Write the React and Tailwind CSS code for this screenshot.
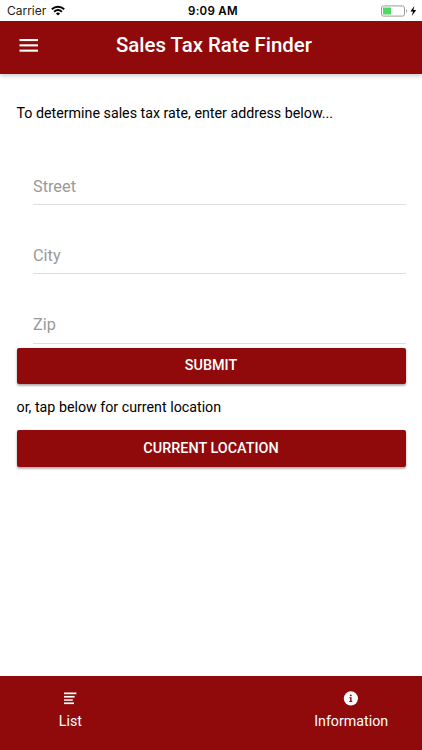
import React, { useState } from 'react';

const fields = [
  { name: 'street', label: 'Street' },
  { name: 'city', label: 'City' },
  { name: 'zip', label: 'Zip' },
];

const StatusBar = () => (
  <div className="relative h-[21px] flex items-center justify-between pl-[7px] pr-[5px] bg-white text-black shrink-0">
    <div className="flex items-center gap-[5px] font-['Inter','Liberation_Sans',sans-serif] text-[12px] leading-[21px] text-[#222222]">
      <span className="w-[39px] tracking-[-0.02px] whitespace-nowrap">Carrier</span>
      <svg width="14" height="11" viewBox="0 0 14 11" fill="none" stroke="#000" strokeWidth="1.9">
        <path d="M0.8 4.2C4.4 0.9 9.6 0.9 13.2 4.2" />
        <path d="M3.1 6.7C5.4 4.7 8.6 4.7 10.9 6.7" />
        <path d="M7 10.5L4.9 8.4C6.1 7.3 7.9 7.3 9.1 8.4Z" fill="#000" stroke="none" />
      </svg>
    </div>
    <span className="absolute left-[188px] top-[1px] font-['Inter','Liberation_Sans',sans-serif] text-[11.5px] leading-[21px] font-semibold tracking-[0.3px] whitespace-nowrap">
      9:09 AM
    </span>
    <svg width="36" height="12" viewBox="0 0 36 12">
      <rect x="0.5" y="0.9" width="23" height="10.2" rx="2" fill="#fff" stroke="#9b9b9b" />
      <rect x="2" y="2.5" width="8" height="7" fill="#4cd964" />
      <path d="M25 4.2C26.3 4.6 26.3 7.4 25 7.8Z" fill="#9b9b9b" />
      <path d="M33.3 1L29.4 6.6H32L30.8 11L35.2 5.1H32.4Z" fill="#000" />
    </svg>
  </div>
);

const SubmitButton = ({ children, onClick }) => (
  <button
    type="button"
    onClick={onClick}
    className="block w-full h-[36.5px] rounded-[2px] bg-[#900a0b] text-white text-[14.4px] font-medium shadow-[0_2px_2px_rgba(0,0,0,0.2),0_1px_3px_rgba(0,0,0,0.2)]"
  >
    {children}
  </button>
);

const App = () => {
  const [form, setForm] = useState({ street: '', city: '', zip: '' });

  return (
    <div className="h-screen flex flex-col bg-white overflow-hidden font-['Roboto',sans-serif]">
      <StatusBar />

      <header className="h-[52.5px] shrink-0 flex items-center bg-[#900a0b] text-white shadow-[0_2px_4px_rgba(0,0,0,0.2)]">
        <button type="button" aria-label="Menu" className="ml-[19px] pb-[3px]">
          <svg width="20" height="13" viewBox="0 0 20 13" fill="#fff">
            <rect x="0.5" y="0" width="18.5" height="2.1" />
            <rect x="0.5" y="5.3" width="18.5" height="2.1" />
            <rect x="0.5" y="10.6" width="18.5" height="2.1" />
          </svg>
        </button>
        <h1 className="ml-[77px] pb-[4px] text-[20.4px] leading-6 font-medium whitespace-nowrap">Sales Tax Rate Finder</h1>
      </header>

      <main className="flex-1 pl-4 pr-[16.5px] pt-[29.5px]">
        <p className="pl-[0.5px] text-[14.25px] leading-[20px] text-black">To determine sales tax rate, enter address below...</p>

        <div className="pt-[13px] pl-[17px]">
          {fields.map((field) => (
            <div key={field.name} className="h-[69.2px] flex flex-col justify-end border-b border-[#dedede]">
              <input
                type="text"
                value={form[field.name]}
                placeholder={field.label}
                onChange={(e) => setForm({ ...form, [field.name]: e.target.value })}
                className="w-full h-[36px] text-[16.3px] text-black placeholder:text-[#999999] focus:outline-none"
              />
            </div>
          ))}
        </div>

        <div className="pt-[4px] pl-[0.5px]">
          <SubmitButton>SUBMIT</SubmitButton>
          <p className="pt-[12.5px] pb-[13.5px] text-[14.25px] leading-[20px] text-black">or, tap below for current location</p>
          <SubmitButton>CURRENT LOCATION</SubmitButton>
        </div>
      </main>

      <footer className="h-[74px] shrink-0 grid grid-cols-3 bg-[#900a0b] text-white text-[14.25px]">
        <button type="button" className="flex flex-col items-center pt-[15px]">
          <svg width="16" height="16" viewBox="0 0 16 16" fill="#fff">
            <rect x="2" y="1.5" width="12.4" height="1.7" />
            <rect x="2" y="4.9" width="10.6" height="1.7" />
            <rect x="2" y="8.2" width="8.8" height="1.7" opacity="0.85" />
            <rect x="2" y="11.4" width="10" height="1.7" />
          </svg>
          <span className="mt-[5px] leading-[18px]">List</span>
        </button>
        <div />
        <button type="button" className="flex flex-col items-center pt-[15px] pr-px">
          <svg width="16" height="16" viewBox="0 0 16 16">
            <circle cx="7.9" cy="7.4" r="7.1" fill="#fff" />
            <circle cx="7.8" cy="4.4" r="0.95" fill="#900a0b" />
            <path d="M6.3 6.3H8.6V10H9.3V10.9H6.3V10H7.1V7.2H6.3Z" fill="#900a0b" />
          </svg>
          <span className="mt-[5px] leading-[18px]">Information</span>
        </button>
      </footer>
    </div>
  );
};

export default App;
